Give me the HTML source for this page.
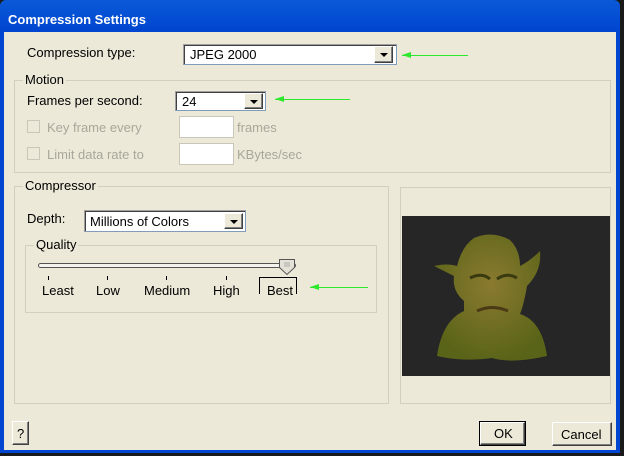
<!DOCTYPE html><html><head><style>
*{margin:0;padding:0;box-sizing:border-box}
body{width:624px;height:456px;overflow:hidden;background:#1a1a1a;font-family:"Liberation Sans",sans-serif;font-size:13px;color:#000;position:relative}
.a{position:absolute}
#win{left:0;top:0;width:620px;height:453px;background:linear-gradient(#0a5ad8,#0046d0 30px);border-radius:6px 6px 0 0}
#client{left:4px;top:32px;width:612px;height:418px;background:#ECE9D8}
.t{position:absolute;white-space:nowrap;line-height:14px}
.grp{position:absolute;border:1px solid #d0d0bf}
.lbl{position:absolute;background:#ECE9D8;padding:0 2px;line-height:14px}
.cb{position:absolute;background:#fff;border:1px solid #7f9db9;border-top-color:#a0a0a0;border-left-color:#a0a0a0;box-shadow:inset 1px 1px 0 #404040}
.btn{position:absolute;background:#ECE9D8;border:1px solid;border-color:#fff #404040 #404040 #fff;box-shadow:inset -1px -1px 0 #808080}
.dd::after{content:"";position:absolute;left:5px;top:6px;border:4px solid transparent;border-top:4px solid #000;border-bottom:0}
.grey{color:#a8a79a}
.chk{position:absolute;width:13px;height:13px;border:1px solid #c9c7ba;background:#ECE9D8}
.tb{position:absolute;background:#fff;border:1px solid #c9c7ba}
.arrow{position:absolute;height:1px;background:#2ee82e}
.arrow::before{content:"";position:absolute;left:0;top:-3px;border:3.5px solid transparent;border-right:9px solid #2ee82e;border-left:0}
</style></head><body>
<div id="win" class="a"></div>
<div class="t" style="left:8px;top:13px;color:#fff;font-weight:bold;font-size:13px">Compression Settings</div>
<div id="client" class="a"></div>

<div class="t" style="left:27px;top:46px">Compression type:</div>
<div class="cb" style="left:183px;top:44px;width:214px;height:21px"><span class="t" style="left:6px;top:3px">JPEG 2000</span>
<div class="btn dd" style="left:190px;top:1px;width:19px;height:17px"></div></div>
<div class="arrow" style="left:402px;top:55px;width:66px"></div>

<div class="grp" style="left:14px;top:80px;width:597px;height:93px"></div>
<div class="lbl" style="left:23px;top:73px">Motion</div>
<div class="t" style="left:27px;top:94px">Frames per second:</div>
<div class="cb" style="left:175px;top:91px;width:91px;height:20px"><span class="t" style="left:6px;top:3px">24</span>
<div class="btn dd" style="left:68px;top:1px;width:19px;height:16px"></div></div>
<div class="arrow" style="left:275px;top:99px;width:75px"></div>
<div class="chk" style="left:27px;top:120px"></div>
<div class="t grey" style="left:47px;top:121px">Key frame every</div>
<div class="tb" style="left:179px;top:116px;width:55px;height:22px"></div>
<div class="t grey" style="left:237px;top:121px">frames</div>
<div class="chk" style="left:27px;top:147px"></div>
<div class="t grey" style="left:47px;top:148px">Limit data rate to</div>
<div class="tb" style="left:179px;top:143px;width:55px;height:22px"></div>
<div class="t grey" style="left:237px;top:148px">KBytes/sec</div>

<div class="grp" style="left:14px;top:186px;width:375px;height:218px"></div>
<div class="lbl" style="left:23px;top:179px">Compressor</div>
<div class="t" style="left:27px;top:212px">Depth:</div>
<div class="cb" style="left:84px;top:210px;width:162px;height:22px"><span class="t" style="left:5px;top:4px">Millions of Colors</span>
<div class="btn dd" style="left:139px;top:2px;width:19px;height:16px"></div></div>

<div class="grp" style="left:25px;top:245px;width:352px;height:68px"></div>
<div class="lbl" style="left:34px;top:238px">Quality</div>
<div class="a" style="left:38px;top:263px;width:258px;height:5px;border:1px solid #555;border-radius:3px;background:#f4f3ee"></div>
<svg class="a" style="left:278px;top:258px" width="20" height="20"><path d="M1.5 1.5h15v8l-7.5 7-7.5-7z" fill="#e4e2d6" stroke="#555"/><path d="M7 4v5M9 4v5M11 4v5" stroke="#aaa"/></svg>
<div class="a" style="left:48px;top:276px;width:1px;height:4px;background:#000"></div>
<div class="a" style="left:107px;top:276px;width:1px;height:4px;background:#000"></div>
<div class="a" style="left:166px;top:276px;width:1px;height:4px;background:#000"></div>
<div class="a" style="left:226px;top:276px;width:1px;height:4px;background:#000"></div>
<div class="a" style="left:259px;top:277px;width:38px;height:17px;border:1px solid #000;border-bottom:0"></div>
<div class="t" style="left:42px;top:284px">Least</div>
<div class="t" style="left:96px;top:284px">Low</div>
<div class="t" style="left:144px;top:284px">Medium</div>
<div class="t" style="left:213px;top:284px">High</div>
<div class="t" style="left:267px;top:284px">Best</div>
<div class="arrow" style="left:310px;top:287px;width:58px"></div>

<div class="grp" style="left:400px;top:187px;width:211px;height:217px"></div>
<div class="a" style="left:402px;top:216px;width:208px;height:160px;background:#262626">
<svg width="208" height="160" viewBox="0 0 208 160">
<defs><radialGradient id="g" cx="50%" cy="40%" r="60%"><stop offset="0" stop-color="#8a7a30"/><stop offset="1" stop-color="#5a6418"/></radialGradient></defs>
<path d="M35 140 Q40 105 62 95 L62 85 Q50 75 52 60 L32 50 Q45 47 55 50 Q60 30 72 22 Q90 14 108 24 Q118 34 118 50 Q128 45 138 35 Q140 55 125 70 Q122 88 118 98 Q140 105 145 140 Q110 148 90 142 Q60 146 35 140Z" fill="url(#g)"/>
<path d="M68 62 Q80 56 88 63 M95 63 Q105 56 115 62" stroke="#3a3a10" stroke-width="3" fill="none"/>
<path d="M75 95 Q90 88 106 95" stroke="#4a3a15" stroke-width="3" fill="none"/>
</svg></div>

<div class="btn" style="left:12px;top:421px;width:17px;height:24px"><span class="t" style="left:4px;top:5px">?</span></div>
<div class="a" style="left:479px;top:421px;width:47px;height:25px;border:1px solid #000"></div>
<div class="btn" style="left:480px;top:422px;width:45px;height:23px"><span class="t" style="left:13px;top:4px">OK</span></div>
<div class="btn" style="left:552px;top:422px;width:60px;height:24px"><span class="t" style="left:8px;top:5px">Cancel</span></div>
</body></html>
